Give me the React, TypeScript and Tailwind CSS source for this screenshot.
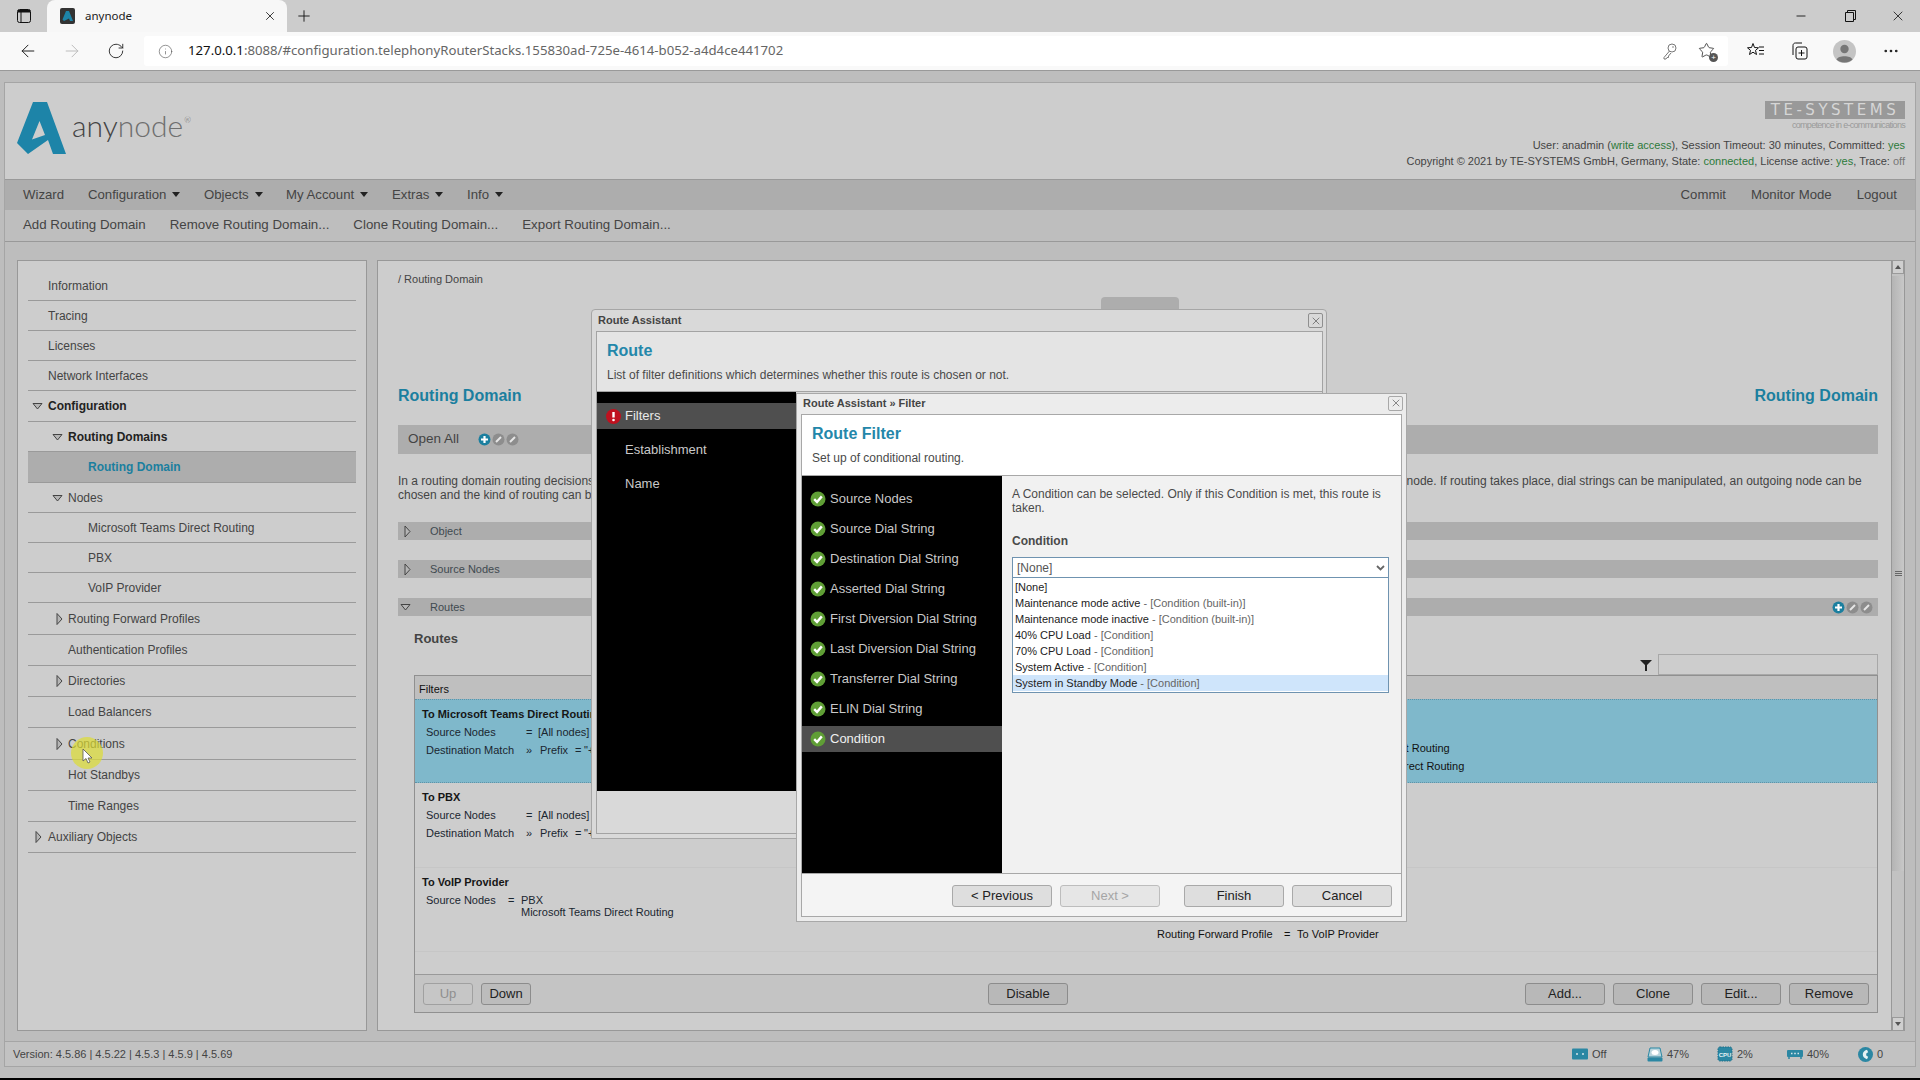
import { ArrowLeft, ArrowRight, Ellipsis, Info, Minus, Plus, RotateCw, Star, X } from "lucide-react";

const navItems = [
  { label: "Configuration", w: "w-[116px]" },
  { label: "Objects", w: "w-[82px]" },
  { label: "My Account", w: "w-[106px]" },
  { label: "Extras", w: "w-[75px]" },
  { label: "Info", w: "w-[50px]" },
];

type SideRow = {
  label: string;
  h: string;
  indent: string;
  arrow?: "down" | "right";
  bold?: boolean;
  active?: boolean;
};

const sideRows: SideRow[] = [
  { label: "Information", h: "h-[30px]", indent: "pl-[20px]" },
  { label: "Tracing", h: "h-[30px]", indent: "pl-[20px]" },
  { label: "Licenses", h: "h-[30px]", indent: "pl-[20px]" },
  { label: "Network Interfaces", h: "h-[30px]", indent: "pl-[20px]" },
  { label: "Configuration", h: "h-[31px]", indent: "pl-[20px]", arrow: "down", bold: true },
  { label: "Routing Domains", h: "h-[30px]", indent: "pl-[40px]", arrow: "down", bold: true },
  { label: "Routing Domain", h: "h-[31px]", indent: "pl-[60px]", active: true },
  { label: "Nodes", h: "h-[30px]", indent: "pl-[40px]", arrow: "down" },
  { label: "Microsoft Teams Direct Routing", h: "h-[30px]", indent: "pl-[60px]" },
  { label: "PBX", h: "h-[30px]", indent: "pl-[60px]" },
  { label: "VoIP Provider", h: "h-[30px]", indent: "pl-[60px]" },
  { label: "Routing Forward Profiles", h: "h-[32px]", indent: "pl-[40px]", arrow: "right" },
  { label: "Authentication Profiles", h: "h-[31px]", indent: "pl-[40px]" },
  { label: "Directories", h: "h-[31px]", indent: "pl-[40px]", arrow: "right" },
  { label: "Load Balancers", h: "h-[31px]", indent: "pl-[40px]" },
  { label: "Conditions", h: "h-[32px]", indent: "pl-[40px]", arrow: "right" },
  { label: "Hot Standbys", h: "h-[31px]", indent: "pl-[40px]" },
  { label: "Time Ranges", h: "h-[31px]", indent: "pl-[40px]" },
  { label: "Auxiliary Objects", h: "h-[31px]", indent: "pl-[20px]", arrow: "right" },
];

const filterSteps = [
  "Source Nodes",
  "Source Dial String",
  "Destination Dial String",
  "Asserted Dial String",
  "First Diversion Dial String",
  "Last Diversion Dial String",
  "Transferrer Dial String",
  "ELIN Dial String",
  "Condition",
];

const options = [
  { name: "Maintenance mode active", kind: "[Condition (built-in)]" },
  { name: "Maintenance mode inactive", kind: "[Condition (built-in)]" },
  { name: "40% CPU Load", kind: "[Condition]" },
  { name: "70% CPU Load", kind: "[Condition]" },
  { name: "System Active", kind: "[Condition]" },
];

function Tri({ dir, className }: { dir: "down" | "right"; className?: string }) {
  if (dir === "down") {
    return (
      <svg width="11" height="8" viewBox="0 0 11 8" className={className}>
        <path d="M1 1.5H10L5.5 7Z" fill="#b5b5b5" stroke="#444" strokeWidth="1" />
      </svg>
    );
  }
  return (
    <svg width="7" height="13" viewBox="0 0 7 13" className={className}>
      <path d="M1 1V12L6 6.5Z" fill="#b5b5b5" stroke="#444" strokeWidth="1" />
    </svg>
  );
}

function RoundBtn({ plus }: { plus?: boolean }) {
  return (
    <svg width="13" height="13" viewBox="0 0 13 13">
      <circle cx="6.5" cy="6.5" r="6" fill={plus ? "#1b7f9f" : "#8d8d8d"} />
      {plus ? (
        <path d="M6.5 3V10M3 6.5H10" stroke="#fff" strokeWidth="2.2" />
      ) : (
        <path d="M4 9L9 4" stroke="#e6e6e6" strokeWidth="2" />
      )}
    </svg>
  );
}

function RoundBtns() {
  return (
    <div className="flex items-center gap-[1px]">
      <RoundBtn plus />
      <RoundBtn />
      <RoundBtn />
    </div>
  );
}

function Check() {
  return (
    <svg width="16" height="16" viewBox="0 0 16 16" className="shrink-0">
      <circle cx="8" cy="8" r="7.5" fill="#5f9e35" />
      <path d="M4.2 8.2L7 11L11.8 5.4" fill="none" stroke="#fff" strokeWidth="2.4" />
    </svg>
  );
}

function Close({ dim }: { dim?: boolean }) {
  return (
    <div className={`flex h-[15px] w-[15px] items-center justify-center rounded-[2px] border ${dim ? "border-[#8f8f8f]" : "border-[#a8a8a8]"}`}>
      <X size={12} strokeWidth={1.1} color="#333" />
    </div>
  );
}

function Btn({ label, w, tone }: { label: string; w: string; tone: "page" | "pageOff" | "dlg" | "dlgOff" | "table" }) {
  const tones = {
    page: "border-[#8c8c8c] bg-[#bcbcbc] text-[#222]",
    pageOff: "border-[#a0a0a0] bg-[#c6c6c6] text-[#8f8f8f]",
    table: "border-[#8c8c8c] bg-[#b8b8b8] text-[#222]",
    dlg: "border-[#a9a9a9] bg-[#dedede] text-[#222]",
    dlgOff: "border-[#bdbdbd] bg-[#e6e6e6] text-[#a5a5a5]",
  };
  return (
    <div className={`flex h-[22px] items-center justify-center rounded-[3px] border text-[13px] ${w} ${tones[tone]}`}>{label}</div>
  );
}

function SectionBar({ label, open, right }: { label: string; open?: boolean; right?: boolean }) {
  return (
    <div className="flex h-[18px] items-center bg-[#adadad] text-[11px] text-[#3f4a50]">
      <div className={`flex w-[32px] ${open ? "pl-[2px]" : "pl-[6px]"}`}>
        {open ? <Tri dir="down" /> : <Tri dir="right" />}
      </div>
      <span>{label}</span>
      {right && (
        <div className="ml-auto pr-[5px]">
          <RoundBtns />
        </div>
      )}
    </div>
  );
}

function RouteRow({
  title,
  selected,
  rightLines,
  rightPad,
  h,
  children,
}: {
  title: string;
  selected?: boolean;
  rightLines?: [string, string][];
  rightPad?: string;
  h: string;
  children: React.ReactNode;
}) {
  return (
    <div className={`flex ${h} text-[11px] text-[#111] ${selected ? "border-y border-dotted border-[#5f93a8] bg-[#7fb8cb]" : "border-b border-[#c6c6c6]"}`}>
      <div className="w-[742px] shrink-0 pl-[7px] pt-[5px]">
        <div className="h-[18px] font-bold leading-[18px] text-[#161616]">{title}</div>
        {children}
      </div>
      {rightLines && (
        <div className={rightPad}>
          {rightLines.map(([k, v]) => (
            <div key={k} className="flex h-[18px] leading-[18px] whitespace-nowrap">
              <span className="w-[127px]">{k}</span>
              <span className="w-[13px]">=</span>
              <span>{v}</span>
            </div>
          ))}
        </div>
      )}
    </div>
  );
}

function NodesPrefixRows() {
  return (
    <div className="pl-[4px] text-[#1a2630]">
      <div className="flex h-[18px] items-center">
        <span className="w-[100px]">Source Nodes</span>
        <span className="w-[12px]">=</span>
        <span>[All nodes]</span>
      </div>
      <div className="flex h-[18px] items-center">
        <span className="w-[100px]">Destination Match</span>
        <span className="w-[14px]">»</span>
        <span className="w-[35px]">Prefix</span>
        <span className="w-[9px]">=</span>
        <span>"+1"</span>
      </div>
    </div>
  );
}

function Sidebar() {
  return (
    <div className="relative h-[771px] w-[350px] shrink-0 border border-[#989898] bg-[#cdcdcd] px-[10px] pt-[10px] text-[12px] text-[#444]">
      {sideRows.map((r) => (
        <div
          key={r.label}
          className={`relative flex items-center border-b border-[#9a9a9a] ${r.h} ${r.indent} ${r.active ? "bg-[#adadad]" : ""}`}
        >
          {r.arrow && (
            <Tri
              dir={r.arrow}
              className={`absolute top-1/2 -translate-y-1/2 ${r.indent === "pl-[20px]" ? (r.arrow === "down" ? "left-[4px]" : "left-[7px]") : r.arrow === "down" ? "left-[24px]" : "left-[28px]"}`}
            />
          )}
          <span className={r.active ? "font-bold text-[#1b7f9f]" : r.bold ? "font-bold text-[#222]" : ""}>{r.label}</span>
        </div>
      ))}
      {/* recorder's cursor highlight */}
      <div className="absolute left-[53px] top-[476px] h-[32px] w-[32px] rounded-full bg-[#dddd33]/70" />
      <svg width="12" height="17" viewBox="0 0 12 17" className="absolute left-[64px] top-[487px]">
        <path d="M1 1V13L4 10.5L6 15L8 14L6 10H10Z" fill="#fff" stroke="#555" strokeWidth="0.8" />
      </svg>
    </div>
  );
}

function MainPanel() {
  return (
    <div className="relative h-[771px] w-[1515px] shrink-0 border border-[#989898] bg-[#cdcdcd] pl-[20px] pr-[13px] text-[12px] text-[#444]">
      <div className="mt-[11px] h-[14px] text-[11px] leading-[14px] text-[#444]">/ Routing Domain</div>
      <div className="mt-[100px] flex h-[20px] justify-between text-[16px] font-bold leading-[20px] text-[#1b7f9f]">
        <span>Routing Domain</span>
        <span>Routing Domain</span>
      </div>
      <div className="mt-[19px] flex h-[29px] items-center bg-[#adadad] pl-[10px]">
        <span className="text-[13.5px] text-[#444]">Open All</span>
        <div className="ml-[19px]">
          <RoundBtns />
        </div>
      </div>
      <div className="mt-[20px] h-[28px] whitespace-nowrap leading-[14px]">
        In a routing domain routing decisions are made for incoming calls, so that a call can be routed to other node or rejected, depending on the
        rules which are applied for the call on this incoming node. If routing takes place, dial strings can be manipulated, an outgoing node can be
        <br />
        chosen and the kind of routing can be configured.
      </div>
      <div className="mt-[20px] flex flex-col gap-[20px]">
        <SectionBar label="Object" />
        <SectionBar label="Source Nodes" />
        <SectionBar label="Routes" open right />
      </div>
      <div className="ml-[16px] mt-[16px] h-[14px] text-[13px] font-bold leading-[14px] text-[#444]">Routes</div>
      <div className="ml-[16px] mt-[8px] flex h-[21px] items-center justify-end">
        <svg width="14" height="14" viewBox="0 0 14 14" className="mr-[5px]">
          <path d="M1 2H13L8 7V13H6V7Z" fill="#222" />
        </svg>
        <div className="h-[21px] w-[220px] border border-[#a8a8a8] bg-[#cdcdcd]" />
      </div>
      <div className="ml-[16px] h-[338px] border border-[#909090]">
        <div className="flex h-[23px] items-center bg-[#bfbfbf] pl-[4px] pt-[3px] text-[11px] text-[#111]">Filters</div>
        <div className="h-[275px]">
          <RouteRow
            title="To Microsoft Teams Direct Routing"
            selected
            h="h-[84px]"
            rightPad="pt-[39px]"
            rightLines={[
              ["Outgoing Node", "Microsoft Teams Direct Routing"],
              ["Routing Forward Profile", "To Microsoft Teams Direct Routing"],
            ]}
          >
            <NodesPrefixRows />
          </RouteRow>
          <RouteRow title="To PBX" h="h-[85px]">
            <NodesPrefixRows />
          </RouteRow>
          <RouteRow title="To VoIP Provider" h="h-[84px]" rightPad="pt-[57px]" rightLines={[["Routing Forward Profile", "To VoIP Provider"]]}>
            <div className="flex pl-[4px] pt-[3px] leading-[12px] text-[#1a2630]">
              <span className="w-[82px]">Source Nodes</span>
              <span className="w-[13px]">=</span>
              <span>
                PBX
                <br />
                Microsoft Teams Direct Routing
              </span>
            </div>
          </RouteRow>
        </div>
        <div className="flex h-[38px] items-center border-t border-[#999] bg-[#c4c4c4] pl-[8px] pr-[8px]">
          <Btn label="Up" w="w-[50px]" tone="pageOff" />
          <div className="ml-[8px]">
            <Btn label="Down" w="w-[50px]" tone="page" />
          </div>
          <div className="ml-[457px]">
            <Btn label="Disable" w="w-[80px]" tone="table" />
          </div>
          <div className="ml-auto flex gap-[8px]">
            <Btn label="Add..." w="w-[80px]" tone="table" />
            <Btn label="Clone" w="w-[80px]" tone="table" />
            <Btn label="Edit..." w="w-[80px]" tone="table" />
            <Btn label="Remove" w="w-[80px]" tone="table" />
          </div>
        </div>
      </div>
      {/* tab stub behind the dialog */}
      <div className="absolute left-[723px] top-[36px] h-[14px] w-[78px] rounded-t-[4px] bg-[#adadad]" />
    </div>
  );
}

function Scrollbar() {
  return (
    <div className="flex h-[771px] w-[13px] shrink-0 flex-col border-r border-[#989898] bg-[#c2c2c2]">
      <div className="flex h-[14px] items-center justify-center border border-[#9a9a9a] bg-[#cfcfcf] text-[#555]">
        <div className="h-0 w-0 border-x-[3px] border-b-[4px] border-x-transparent border-b-[#555]" />
      </div>
      <div className="mt-[2px] flex h-[595px] items-center justify-center bg-gradient-to-r from-[#b4b4b4] to-[#c8c8c8]">
        <div className="flex w-[7px] flex-col gap-[1px]">
          <div className="h-[1px] bg-[#666]" />
          <div className="h-[1px] bg-[#666]" />
          <div className="h-[1px] bg-[#666]" />
        </div>
      </div>
      <div className="mt-auto flex h-[14px] items-center justify-center border border-[#9a9a9a] bg-[#cfcfcf]">
        <div className="h-0 w-0 border-x-[3px] border-t-[4px] border-x-transparent border-t-[#555]" />
      </div>
    </div>
  );
}

function StatusIcon({ kind }: { kind: "rack" | "disk" | "cpu" | "ram" | "phone" }) {
  const teal = "#2b87a3";
  if (kind === "rack") {
    return (
      <svg width="16" height="12" viewBox="0 0 16 12">
        <rect width="16" height="11" y="0.5" rx="1" fill={teal} />
        <path d="M4 6H6M10 6H12" stroke="#d5e5ea" strokeWidth="1.4" />
      </svg>
    );
  }
  if (kind === "disk") {
    return (
      <svg width="16" height="15" viewBox="0 0 16 15">
        <path d="M3 1H13L15 10H1Z" fill="#b9d4dc" stroke={teal} />
        <ellipse cx="8" cy="5.5" rx="3.5" ry="2.5" fill="#fff" />
        <rect x="0.5" y="10.5" width="15" height="4" rx="1" fill={teal} />
      </svg>
    );
  }
  if (kind === "cpu") {
    return (
      <svg width="16" height="16" viewBox="0 0 16 16">
        <rect x="1" y="1" width="14" height="14" rx="2" fill={teal} stroke="#1c6f88" strokeDasharray="1.5 1" />
        <text x="8" y="10.5" textAnchor="middle" fontSize="6" fontWeight="700" fill="#e6f1f4" fontFamily="Liberation Sans, sans-serif">
          CPU
        </text>
      </svg>
    );
  }
  if (kind === "ram") {
    return (
      <svg width="16" height="9" viewBox="0 0 16 9">
        <rect width="16" height="7" rx="1" fill={teal} />
        <path d="M4 3.5H5.5M7.2 3.5H8.8M10.5 3.5H12" stroke="#d5e5ea" strokeWidth="1.4" />
        <path d="M2 7V9M14 7V9" stroke={teal} strokeWidth="1.5" />
      </svg>
    );
  }
  return (
    <svg width="15" height="15" viewBox="0 0 15 15">
      <circle cx="7.5" cy="7.5" r="7.5" fill={teal} />
      <path d="M9 2.8C6 3.5 4.8 5.5 4.8 7.6C4.8 9.6 6 11.5 9 12.2L10.2 9.8L8.8 9C8 8.5 8 6.5 8.8 6L10.2 5.2Z" fill="#e6f1f4" />
    </svg>
  );
}

function StatusItem({ kind, value, w }: { kind: "rack" | "disk" | "cpu" | "ram" | "phone"; value: string; w: string }) {
  return (
    <div className={`flex items-center gap-[4px] ${w}`}>
      <StatusIcon kind={kind} />
      <span>{value}</span>
    </div>
  );
}

function BrowserChrome() {
  return (
    <>
      <div className="flex h-[32px] shrink-0 items-end bg-[#cccccc]">
        <div className="flex h-[32px] w-[47px] items-center justify-center">
          <svg width="14" height="14" viewBox="0 0 14 14">
            <rect x="0.5" y="0.5" width="13" height="13" rx="2" fill="none" stroke="#111" />
            <path d="M1 1H13V3.5H1Z" fill="#111" />
            <path d="M4 3V13" stroke="#111" />
          </svg>
        </div>
        <div className="flex h-[32px] w-[240px] items-center rounded-t-[8px] bg-[#f7f7f7] pl-[13px] pr-[10px]">
          <svg width="15" height="16" viewBox="0 0 15 16">
            <rect width="15" height="16" rx="2" fill="#333" />
            <path d="M6 3H9L13 13H10L9 10.5L4 13L2.5 11.5Z" fill="#1d84a8" />
          </svg>
          <span className="ml-[10px] text-[11.5px] text-[#222] [font-family:'Noto_Sans',sans-serif]">anynode</span>
          <X size={14} strokeWidth={1.5} color="#222" className="ml-auto" />
        </div>
        <div className="flex h-[32px] w-[34px] items-center justify-center">
          <Plus size={18} strokeWidth={1.2} color="#111" />
        </div>
        <div className="ml-auto flex h-[32px] items-center pr-[14px]">
          <Minus size={14} strokeWidth={1.5} color="#111" className="mr-[37px]" />
          <svg width="11" height="12" viewBox="0 0 11 12" className="mr-[34px]">
            <path d="M0.5 2.5H8.5V11.5H0.5Z M2.5 2.5V0.5H10.5V9.5H8.5" fill="none" stroke="#111" />
          </svg>
          <X size={16} strokeWidth={1.2} color="#111" />
        </div>
      </div>
      <div className="flex h-[39px] shrink-0 items-center border-b border-[#999] bg-[#f9f9f9]">
        <div className="flex w-[144px] items-center pl-[18px]">
          <ArrowLeft size={20} strokeWidth={1.2} color="#222" />
          <ArrowRight size={20} strokeWidth={1.2} color="#bdbdbd" className="ml-[24px]" />
          <RotateCw size={18} strokeWidth={1.2} color="#222" className="ml-[25px]" />
        </div>
        <div className="flex h-[30px] w-[1584px] items-center rounded-[3px] bg-white pl-[14px] pr-[12px]">
          <Info size={15} strokeWidth={1} color="#555" />
          <span className="ml-[15px] text-[13.2px] text-[#666] [font-family:'Noto_Sans',sans-serif]">
            <span className="text-[#111]">127.0.0.1</span>:8088/#configuration.telephonyRouterStacks.155830ad-725e-4614-b052-a4d4ce441702
          </span>
          <div className="ml-auto flex items-center gap-[21px]">
            <svg width="15" height="17" viewBox="0 0 15 17">
              <circle cx="10" cy="5" r="4" fill="none" stroke="#777" />
              <circle cx="11" cy="4" r="0.8" fill="#777" />
              <path d="M7.5 8L2 14.5V16H4L5 14.5H6.5V13L9 10" fill="none" stroke="#777" />
            </svg>
            <div className="relative h-[18px] w-[18px]">
              <Star size={17} strokeWidth={1.1} color="#222" />
              <div className="absolute bottom-[-2px] right-[-2px] flex h-[9px] w-[9px] items-center justify-center rounded-full bg-[#555] text-[8px] leading-none text-white">+</div>
            </div>
          </div>
        </div>
        <div className="flex flex-1 items-center pl-[19px]">
          <svg width="18" height="18" viewBox="0 0 18 18">
            <path d="M6 1.5L7.5 5.5L11.5 5.8L8.5 8.4L9.5 12.5L6 10.2L2.5 12.5L3.5 8.4L0.5 5.8L4.5 5.5Z" fill="none" stroke="#111" />
            <path d="M12 5H17M12 8.5H17M12 12H17" stroke="#111" />
          </svg>
          <svg width="18" height="18" viewBox="0 0 18 18" className="ml-[25px]">
            <path d="M3 13V3.5C3 2 4 1 5.5 1L12 1" fill="none" stroke="#111" />
            <rect x="6" y="5" width="11" height="12" rx="2" fill="none" stroke="#111" />
            <path d="M11.5 8V14M8.5 11H14.5" stroke="#111" />
          </svg>
          <svg width="23" height="23" viewBox="0 0 23 23" className="ml-[25px]">
            <circle cx="11.5" cy="11.5" r="11.5" fill="#c4c4c4" />
            <circle cx="11.5" cy="9" r="4.2" fill="#777" />
            <path d="M3.5 19.5C5 15 18 15 19.5 19.5C16 23.5 7 23.5 3.5 19.5Z" fill="#777" />
          </svg>
          <Ellipsis size={18} strokeWidth={1.6} color="#222" className="ml-[26px]" />
        </div>
      </div>
    </>
  );
}

function AppHeader() {
  return (
    <>
      <div className="flex h-[96px] bg-[#cdcdcd]">
        <div className="flex pl-[12px] pt-[19px]">
          <svg width="49" height="52" viewBox="0 0 49 52" className="shrink-0">
            <path fillRule="evenodd" d="M16 0H30L49 52H36L31 38L11 52L0 41ZM22.5 19L15 37.5L28 33Z" fill="#1d84a8" />
          </svg>
          <div className="ml-[6px] mt-[5px] flex h-[36px] items-start text-[30px] font-light leading-[36px] text-[#666] [font-family:Lato,sans-serif]">
            <span className="text-[#444]">any</span>
            <span className="text-[#6f6f6f]">node</span>
            <span className="ml-[1px] mt-[-5px] text-[8px]">®</span>
          </div>
        </div>
        <div className="ml-auto flex flex-col items-end pr-[10px] pt-[18px] text-[11px] leading-[16px] text-[#444]">
          <div className="flex h-[18px] w-[140px] items-center justify-center bg-[#999] text-[15px] tracking-[3.5px] text-[#d6d6d6] [font-family:'DejaVu_Sans',sans-serif]">
            TE-SYSTEMS
          </div>
          <div className="mt-[1px] h-[11px] text-[9px] leading-[11px] tracking-[-0.7px] text-[#9a9a9a]">competence in e-communications</div>
          <div className="mt-[6px] h-[16px]">
            User: anadmin (<span className="text-[#2c7a3a]">write access</span>), Session Timeout: 30 minutes, Committed: <span className="text-[#2c7a3a]">yes</span>
          </div>
          <div className="h-[16px]">
            Copyright © 2021 by TE-SYSTEMS GmbH, Germany, State: <span className="text-[#2c7a3a]">connected</span>, License active: <span className="text-[#2c7a3a]">yes</span>, Trace: <span className="text-[#777]">off</span>
          </div>
        </div>
      </div>
      <div className="flex h-[31px] items-center border-t border-[#999] bg-[#adadad] pl-[18px] pr-[18px] text-[13.2px] text-[#444]">
        <span className="w-[65px]">Wizard</span>
        {navItems.map((n) => (
          <div key={n.label} className={`flex items-center ${n.w}`}>
            <span>{n.label}</span>
            <div className="ml-[6px] h-0 w-0 border-x-[4px] border-t-[5px] border-x-transparent border-t-[#222]" />
          </div>
        ))}
        <div className="ml-auto flex gap-[25px]">
          <span>Commit</span>
          <span>Monitor Mode</span>
          <span>Logout</span>
        </div>
      </div>
      <div className="flex h-[32px] items-center gap-[24px] border-b border-[#999] bg-[#bebebe] pb-[1px] pl-[18px] text-[13.3px] text-[#444]">
        <span>Add Routing Domain</span>
        <span>Remove Routing Domain...</span>
        <span>Clone Routing Domain...</span>
        <span>Export Routing Domain...</span>
      </div>
    </>
  );
}

function OuterDialog() {
  return (
    <div className="absolute left-[591px] top-[309px] flex h-[530px] w-[736px] flex-col rounded-t-[4px] border border-[#a6a6a6] bg-[#d9d9d9] pb-[4px] pl-[4px] pr-[3px]">
      <div className="flex h-[21px] shrink-0 items-center justify-between text-[11px] font-bold text-[#444]">
        <span className="pl-[2px]">Route Assistant</span>
        <Close dim />
      </div>
      <div className="flex flex-1 flex-col border border-[#a3a3a3]">
        <div className="h-[60px] border-b border-[#a3a3a3] bg-[#e4e4e4] pl-[10px] pt-[9px]">
          <div className="h-[20px] text-[16px] font-bold leading-[20px] text-[#2387aa]">Route</div>
          <div className="mt-[7px] text-[12px] leading-[14px] text-[#4a4a4a]">List of filter definitions which determines whether this route is chosen or not.</div>
        </div>
        <div className="h-[399px] w-[199px] bg-black pt-[11px] text-[13px] text-[#c9c9c9]">
          <div className="flex h-[26px] items-center bg-[#4f4f4f] pl-[9px] text-[#e9e9e9]">
            <svg width="15" height="15" viewBox="0 0 15 15">
              <circle cx="7.5" cy="7.5" r="7.5" fill="#c0111f" />
              <path d="M7.5 3V8.5" stroke="#fff" strokeWidth="2.4" />
              <circle cx="7.5" cy="11" r="1.3" fill="#fff" />
            </svg>
            <span className="ml-[4px]">Filters</span>
          </div>
          <div className="mt-[1px] flex h-[34px] items-center pl-[28px] pt-[6px]">Establishment</div>
          <div className="flex h-[34px] items-center pl-[28px] pt-[6px]">Name</div>
        </div>
      </div>
    </div>
  );
}

function InnerDialog() {
  return (
    <div className="absolute left-[796px] top-[393px] flex h-[529px] w-[611px] flex-col border border-[#a8a8a8] bg-[#ececec] px-[4px] pb-[4px]">
      <div className="flex h-[20px] shrink-0 items-center justify-between pb-[2px] text-[11px] font-bold text-[#444]">
        <span className="pl-[2px]">Route Assistant » Filter</span>
        <div className="mr-[-1px]">
          <Close />
        </div>
      </div>
      <div className="flex flex-1 flex-col border border-[#a8a8a8] bg-[#f1f1f1]">
        <div className="h-[61px] shrink-0 border-b border-[#a8a8a8] bg-white pl-[10px] pt-[9px]">
          <div className="h-[20px] text-[16px] font-bold leading-[20px] text-[#2387aa]">Route Filter</div>
          <div className="mt-[7px] text-[12px] leading-[14px] text-[#4a4a4a]">Set up of conditional routing.</div>
        </div>
        <div className="flex flex-1">
          <div className="w-[200px] shrink-0 bg-black pt-[10px] text-[13px] text-[#c9c9c9]">
            {filterSteps.map((s) => (
              <div key={s} className={`mb-[4px] flex h-[26px] items-center gap-[4px] pl-[8px] ${s === "Condition" ? "bg-[#4f4f4f] text-[#f0f0f0]" : ""}`}>
                <Check />
                <span>{s}</span>
              </div>
            ))}
          </div>
          <div className="flex-1 pl-[10px] pr-[12px] pt-[11px] text-[12px] text-[#4a4a4a]">
            <div className="leading-[14px]">A Condition can be selected. Only if this Condition is met, this route is taken.</div>
            <div className="mt-[19px] h-[14px] font-bold leading-[14px] text-[#4a4a4a]">Condition</div>
            <div className="mt-[9px] flex h-[21px] items-center justify-between border border-[#6f93b0] bg-white pl-[4px] pr-[3px] text-[#555]">
              <span>[None]</span>
              <svg width="9" height="6" viewBox="0 0 9 6">
                <path d="M1 1L4.5 4.5L8 1" fill="none" stroke="#666" strokeWidth="1.8" />
              </svg>
            </div>
            <div className="h-[115px] border border-t-0 border-[#6f93b0] bg-white pt-[1px] text-[11px] leading-[16px] text-[#222]">
              <div className="pl-[2px]">[None]</div>
              {options.map((o) => (
                <div key={o.name} className="pl-[2px]">
                  {o.name} <span className="text-[#666]">- {o.kind}</span>
                </div>
              ))}
              <div className="bg-[#cfe5fb] pl-[2px]">
                System in Standby Mode <span className="text-[#666]">- [Condition]</span>
              </div>
            </div>
          </div>
        </div>
        <div className="flex h-[43px] shrink-0 items-center border-t border-[#a8a8a8] bg-[#f4f4f4] pl-[150px] pt-[2px]">
          <Btn label="< Previous" w="w-[100px]" tone="dlg" />
          <div className="ml-[8px]">
            <Btn label="Next >" w="w-[100px]" tone="dlgOff" />
          </div>
          <div className="ml-[24px]">
            <Btn label="Finish" w="w-[100px]" tone="dlg" />
          </div>
          <div className="ml-[8px]">
            <Btn label="Cancel" w="w-[100px]" tone="dlg" />
          </div>
        </div>
      </div>
    </div>
  );
}

export default function App() {
  return (
    <div className="relative flex h-[1080px] w-[1920px] flex-col overflow-hidden bg-[#bdbdbd] [font-family:'Liberation_Sans',Arial,sans-serif]">
      <BrowserChrome />
      <div className="flex-1 pl-[4px] pt-[11px]">
        <div className="w-[1912px] border-x border-t border-[#a5a5a5]">
          <AppHeader />
          <div className="flex pl-[12px] pt-[18px]">
            <Sidebar />
            <div className="w-[10px] shrink-0" />
            <MainPanel />
            <Scrollbar />
          </div>
          <div className="mt-[10px] flex h-[26px] items-center border-y border-[#a5a5a5] bg-[#c2c2c2] pl-[8px] text-[11px] text-[#444]">
            <span>Version: 4.5.86 | 4.5.22 | 4.5.3 | 4.5.9 | 4.5.69</span>
            <div className="ml-auto flex items-center">
              <StatusItem kind="rack" value="Off" w="w-[75px]" />
              <StatusItem kind="disk" value="47%" w="w-[70px]" />
              <StatusItem kind="cpu" value="2%" w="w-[70px]" />
              <StatusItem kind="ram" value="40%" w="w-[71px]" />
              <StatusItem kind="phone" value="0" w="w-[57px]" />
            </div>
          </div>
        </div>
      </div>
      <div className="h-[2px] shrink-0 bg-black" />
      <OuterDialog />
      <InnerDialog />
    </div>
  );
}
